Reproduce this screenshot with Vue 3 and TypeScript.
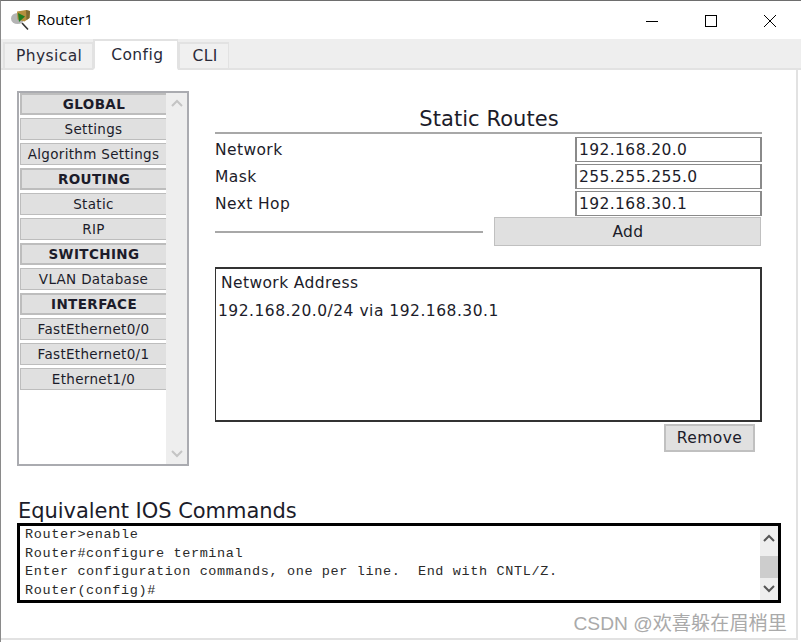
<script setup lang="ts">
const menu: { label: string; head?: boolean }[] = [
  { label: 'GLOBAL', head: true },
  { label: 'Settings' },
  { label: 'Algorithm Settings' },
  { label: 'ROUTING', head: true },
  { label: 'Static' },
  { label: 'RIP' },
  { label: 'SWITCHING', head: true },
  { label: 'VLAN Database' },
  { label: 'INTERFACE', head: true },
  { label: 'FastEthernet0/0' },
  { label: 'FastEthernet0/1' },
  { label: 'Ethernet1/0' },
]
const fields = [
  { label: 'Network', value: '192.168.20.0' },
  { label: 'Mask', value: '255.255.255.0' },
  { label: 'Next Hop', value: '192.168.30.1' },
]
const commands = [
  'Router>enable',
  'Router#configure terminal',
  'Enter configuration commands, one per line.  End with CNTL/Z.',
  'Router(config)#',
]
</script>

<template>
  <div class="window">
    <header class="titlebar">
      <svg class="app-icon" width="26" height="24" viewBox="0 0 26 24">
        <path d="M12 14l6 6.5" stroke="#333" stroke-width="1.6" />
        <ellipse cx="7.5" cy="9.5" rx="6.5" ry="5.5" fill="#b4b4b4" />
        <path d="M7 2.5l9-1.5 4 1-.5 7-5 3.5-7-2z" fill="#b48f3e" />
        <path d="M16 1l4 1-.5 7-3 2z" fill="#7d6a32" />
        <path d="M8 4l7 3.5-6 5.5z" fill="#1d7d20" />
      </svg>
      <span class="title">Router1</span>
      <div class="controls">
        <svg width="14" height="14" viewBox="0 0 14 14"><path d="M1 7.5h12" stroke="#000" stroke-width="1" /></svg>
        <svg width="14" height="14" viewBox="0 0 14 14"><rect x="1.5" y="1.5" width="11" height="11" fill="none" stroke="#000" /></svg>
        <svg width="14" height="14" viewBox="0 0 14 14"><path d="M1 1l12 12M13 1L1 13" stroke="#000" stroke-width="1" /></svg>
      </div>
    </header>

    <nav class="tabs">
      <div class="tab">Physical</div>
      <div class="tab active">Config</div>
      <div class="tab last">CLI</div>
    </nav>

    <main class="panel">
      <div class="upper">
        <aside class="sidebar">
          <div class="menu">
            <div v-for="item in menu" :key="item.label" class="menu-item" :class="{ head: item.head }">{{ item.label }}</div>
          </div>
          <div class="menu-scroll">
            <svg width="14" height="8" viewBox="0 0 14 8"><path d="M2 7l5-5 5 5" fill="none" stroke="#c4c4c4" stroke-width="2" /></svg>
            <svg width="14" height="8" viewBox="0 0 14 8"><path d="M2 1l5 5 5-5" fill="none" stroke="#c4c4c4" stroke-width="2" /></svg>
          </div>
        </aside>

        <section class="routes">
          <h2 class="routes-title">Static Routes</h2>
          <div class="form">
            <div v-for="f in fields" :key="f.label" class="field">
              <label>{{ f.label }}</label>
              <div class="input">{{ f.value }}</div>
            </div>
          </div>
          <div class="add-row">
            <div class="rule"></div>
            <button class="btn add">Add</button>
          </div>
          <div class="list">
            <div class="list-head">Network Address</div>
            <div class="list-row">192.168.20.0/24 via 192.168.30.1</div>
          </div>
          <div class="remove-row">
            <button class="btn remove">Remove</button>
          </div>
        </section>
      </div>

      <h2 class="ios-title">Equivalent IOS Commands</h2>
      <div class="terminal">
        <div class="term-text">
          <div v-for="c in commands" :key="c">{{ c }}</div>
        </div>
        <div class="term-scroll">
          <svg width="14" height="8" viewBox="0 0 14 8"><path d="M2 7l5-5 5 5" fill="none" stroke="#555" stroke-width="2" /></svg>
          <div class="thumb"></div>
          <svg width="14" height="8" viewBox="0 0 14 8"><path d="M2 1l5 5 5-5" fill="none" stroke="#555" stroke-width="2" /></svg>
        </div>
      </div>
      <div class="watermark">CSDN @欢喜躲在眉梢里</div>
    </main>
  </div>
</template>

<style>
html, body { margin: 0; background: #fff; }
</style>

<style scoped>
.window {
  width: 801px;
  height: 642px;
  box-sizing: border-box;
  border-top: 1px solid #6e6e6e;
  border-left: 1px solid #8a8a8a;
  display: flex;
  flex-direction: column;
  overflow: hidden;
  background: #fff;
  font-family: "DejaVu Sans", sans-serif;
  color: #1c1c2a;
}
.titlebar {
  height: 38px;
  flex: none;
  display: flex;
  align-items: center;
  padding-left: 9px;
}
.app-icon { margin-top: 2px; }
.title {
  font-family: "Open Sans", "Noto Sans", sans-serif;
  font-size: 15px;
  line-height: 20px;
  color: #000;
  margin-left: 1px;
  margin-top: -2px;
}
.controls {
  margin-left: auto;
  display: flex;
  gap: 45px;
  padding-right: 24px;
  padding-top: 2px;
}
.tabs {
  height: 31px;
  flex: none;
  box-sizing: border-box;
  background: #eee;
  display: flex;
  align-items: flex-end;
  padding-left: 2px;
  border-bottom: 2px solid #e2e2e2;
}
.tab {
  height: 28px;
  box-sizing: border-box;
  padding: 0 10px 0 11px;
  margin-bottom: -2px;
  font-size: 15.5px;
  letter-spacing: 0.4px;
  line-height: 25px;
  border: 2px solid #e2e2e2;
  border-right-width: 1px;
  background: #f0f0f0;
  color: #2a2a38;
  white-space: nowrap;
}
.tab.active {
  height: 31px;
  padding: 0 14px 0 16px;
  line-height: 28px;
  background: #fff;
  border-bottom-color: #fff;
}
.tab.last { padding: 0 10px 0 12px; }
.panel {
  flex: 1;
  min-height: 0;
  box-sizing: border-box;
  margin-right: 3px;
  margin-bottom: 2px;
  border-right: 2px solid #e2e2e2;
  border-bottom: 2px solid #e2e2e2;
  padding: 21px 0 0 16px;
  position: relative;
  background: #fff;
}
.upper {
  display: flex;
  align-items: flex-start;
}
.sidebar {
  width: 172px;
  height: 375px;
  box-sizing: border-box;
  flex: none;
  border: 2px solid #aaabb0;
  display: flex;
  background: #fff;
}
.menu {
  flex: 1;
  padding: 0 0 0 1px;
  display: flex;
  flex-direction: column;
  gap: 3px;
}
.menu-item {
  height: 22px;
  box-sizing: border-box;
  border: 1px solid #bdbdbd;
  border-right: 0;
  background: #e0e0e0;
  text-align: center;
  font-size: 13.5px;
  letter-spacing: 0.32px;
  line-height: 20px;
  white-space: nowrap;
}
.menu-item.head {
  font-weight: 700;
  letter-spacing: 0.4px;
  border-width: 2px 0 2px 2px;
  line-height: 18px;
}
.menu-scroll {
  width: 21px;
  flex: none;
  background: #eee;
  display: flex;
  flex-direction: column;
  align-items: center;
  justify-content: space-between;
  padding: 6px 0;
  box-sizing: border-box;
}
.routes {
  margin-left: 26px;
  width: 547px;
}
.routes-title {
  margin: 15px 0 0;
  height: 28px;
  box-sizing: border-box;
  font-weight: 400;
  font-size: 21px;
  letter-spacing: 0.05px;
  line-height: 26px;
  text-align: center;
  padding-left: 1px;
  border-bottom: 2px solid #a8a8a8;
}
.form {
  padding-top: 3px;
  display: flex;
  flex-direction: column;
  gap: 2px;
}
.field {
  display: flex;
  justify-content: space-between;
  align-items: center;
}
.field label {
  font-size: 15.5px;
  letter-spacing: 0.4px;
  line-height: 18px;
  padding-top: 1px;
}
.input {
  width: 187px;
  height: 25px;
  box-sizing: border-box;
  border: 2px solid #8a8a8a;
  border-bottom-width: 1px;
  border-top-width: 1px;
  font-size: 15.5px;
  letter-spacing: 0.4px;
  line-height: 24px;
  padding-left: 2px;
  background: #fff;
}
.add-row {
  display: flex;
  align-items: center;
  gap: 11px;
  margin-top: 1px;
}
.rule {
  width: 268px;
  height: 2px;
  background: #a8a8a8;
}
.btn {
  box-sizing: border-box;
  border: 1px solid #c0c0c0;
  background: #e0e0e0;
  color: #1c1c2a;
  padding: 0;
  font-family: "DejaVu Sans", sans-serif;
  font-size: 15.5px;
  letter-spacing: 0.4px;
}
.add { width: 267px; height: 29px; padding-left: 1px; }
.list {
  margin-top: 21px;
  height: 155px;
  box-sizing: border-box;
  border: 2px solid #333;
  border-width: 2px 2px 2px 1px;
}
.list-head {
  font-size: 15.5px;
  letter-spacing: 0.4px;
  line-height: 18px;
  padding: 5px 0 0 5px;
}
.list-row {
  font-size: 15.5px;
  letter-spacing: 0.5px;
  line-height: 18px;
  padding: 10px 0 0 2px;
}
.remove-row {
  display: flex;
  justify-content: flex-end;
  padding-right: 7px;
  margin-top: 2px;
}
.remove { width: 91px; height: 28px; border-width: 2px; }
.ios-title {
  margin: 33px 0 0;
  padding-left: 1px;
  font-weight: 400;
  font-size: 21px;
  letter-spacing: -0.04px;
  line-height: 24px;
}
.terminal {
  width: 764px;
  height: 80px;
  box-sizing: border-box;
  border: 3px solid #000;
  display: flex;
  background: #fff;
}
.term-text {
  flex: 1;
  padding-left: 5px;
  font-family: "Liberation Mono", monospace;
  font-size: 13.5px;
  letter-spacing: 0.63px;
  line-height: 18.7px;
  color: #2a2a2a;
  white-space: pre;
  overflow: hidden;
}
.term-scroll {
  width: 18px;
  flex: none;
  background: #eee;
  display: flex;
  flex-direction: column;
  align-items: center;
  box-sizing: border-box;
  padding-top: 8px;
}
.thumb {
  width: 100%;
  height: 22px;
  flex: none;
  background: #cdcdcd;
  margin: 14px 0 7px;
}
.watermark {
  position: absolute;
  right: 9px;
  bottom: 3px;
  font-family: "Liberation Sans", "Noto Sans CJK SC", sans-serif;
  font-size: 19.2px;
  line-height: 22px;
  color: #aaa;
}
</style>
